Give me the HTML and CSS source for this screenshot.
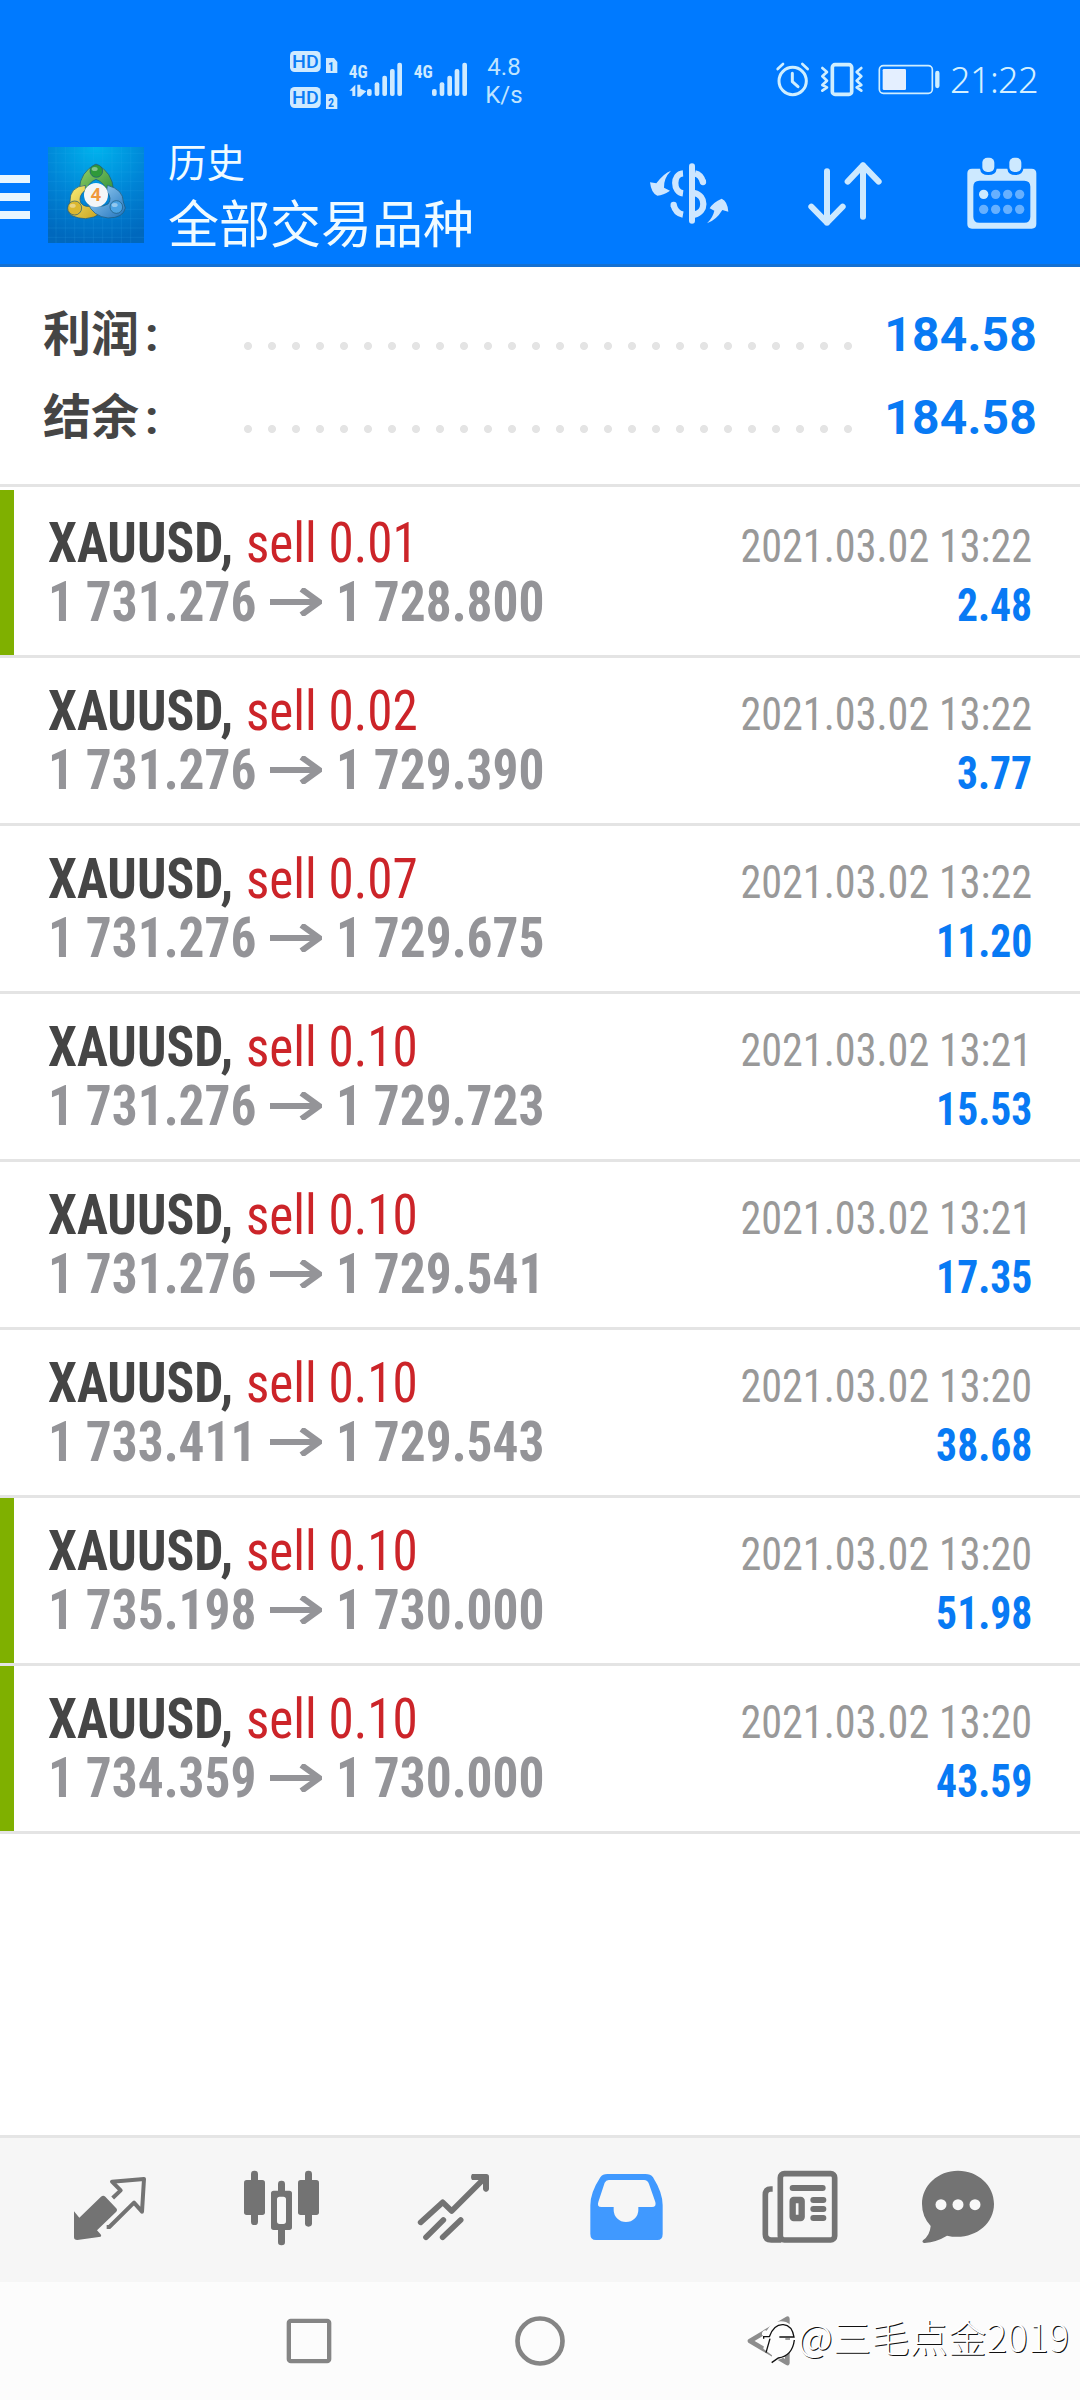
FILE: index.html
```html
<!DOCTYPE html>
<html lang="zh-CN">
<head>
<meta charset="utf-8">
<title>历史</title>
<link rel="stylesheet" href="styles.css">
</head>
<body>
<svg class="defs" width="0" height="0" aria-hidden="true">
  <symbol id="arrow" viewBox="0 0 156 84"><path d="M0 42H144M94 3L148 42L94 81" fill="none" stroke="#949498" stroke-width="18"/></symbol>
</svg>
<header class="top">
  <div class="status">
    <svg class="signal" width="200" height="90" viewBox="0 0 600 270">
      <g fill="#cfeaff">
        <rect x="60" y="63" width="92" height="63" rx="14"/><rect x="60" y="171" width="92" height="63" rx="14"/>
        <path d="M168 84h24l10 12v33h-34zM168 192h24l10 12v33h-34z"/>
        <rect x="291" y="177" width="14" height="21" rx="6"/><rect x="314" y="157" width="14" height="41" rx="6"/><rect x="337" y="137" width="14" height="61" rx="6"/><rect x="360" y="117" width="14" height="81" rx="6"/><rect x="382" y="98" width="14" height="100" rx="6"/>
        <rect x="486" y="177" width="14" height="21" rx="6"/><rect x="509" y="157" width="14" height="41" rx="6"/><rect x="532" y="137" width="14" height="61" rx="6"/><rect x="554" y="117" width="14" height="81" rx="6"/><rect x="577" y="98" width="14" height="100" rx="6"/>
        <path d="M238 182l18-18v34h-9v-16zM262 164h9v12l18 8-18 16h-9z"/>
        <text class="net" x="236" y="143" textLength="57" lengthAdjust="spacingAndGlyphs">4G</text>
        <text class="net" x="431" y="143" textLength="57" lengthAdjust="spacingAndGlyphs">4G</text>
      </g>
      <g fill="#0a7cf5">
        <text class="hd" x="66" y="115" textLength="80" lengthAdjust="spacingAndGlyphs">HD</text>
        <text class="hd" x="66" y="223" textLength="80" lengthAdjust="spacingAndGlyphs">HD</text>
        <text class="sim" x="174" y="124">1</text><text class="sim" x="174" y="232">2</text>
      </g>
    </svg>
    <div class="speed">4.8<br>K/s</div>
    <svg class="power" width="180" height="40" viewBox="45 60 540 120" fill="none" stroke="#cfeeff" stroke-linecap="round" stroke-linejoin="round">
      <circle cx="98" cy="123" r="41" stroke-width="9"/><path d="M97 100v25l17 15" stroke-width="9"/><path d="M53 87l16-15M143 87l-16-15" stroke-width="8"/>
      <rect x="217" y="74" width="58" height="89" rx="8" stroke-width="11"/>
      <path d="M187 84l14 12-14 13 14 13-14 13 14 7-14 10M304 84l-14 12 14 13-14 13 14 13-14 7 14 10" stroke-width="8"/>
      <rect x="358" y="77" width="159" height="83" rx="12" stroke-width="5"/><rect x="368" y="87" width="70" height="63" rx="4" fill="#e4efff" stroke="none"/><path d="M532 99v39" stroke-width="13"/>
    </svg>
    <div class="clock">21:22</div>
  </div>
  <div class="bar">
    <svg class="menu" width="30" height="44" viewBox="0 0 30 44" fill="#e8f6ff"><path d="M0 0h30v8H0zM0 18h30v8H0zM0 36h30v8H0z"/></svg>
    <svg class="logo" width="96" height="96" viewBox="144 51 288 288">
      <defs>
        <radialGradient id="sky" cx=".5" cy="0" r="1"><stop offset="0" stop-color="#00b4ee"/><stop offset=".55" stop-color="#0084d6"/><stop offset="1" stop-color="#0068bd"/></radialGradient>
        <linearGradient id="gr" x1="0" y1="0" x2="1" y2="1"><stop offset="0" stop-color="#9bd36a"/><stop offset="1" stop-color="#2b8f3a"/></linearGradient>
        <linearGradient id="ye" x1="0" y1="0" x2="1" y2="1"><stop offset="0" stop-color="#fbf07a"/><stop offset="1" stop-color="#c9a01c"/></linearGradient>
        <linearGradient id="bl" x1="0" y1="0" x2="1" y2="1"><stop offset="0" stop-color="#a4d8f8"/><stop offset="1" stop-color="#1f72bd"/></linearGradient>
      </defs>
      <path fill="url(#sky)" d="M144 51h288v288H144z"/>
      <path d="M168 51v288M196 51v288M224 51v288M252 51v288M280 51v288M308 51v288M336 51v288M364 51v288M392 51v288M144 70h288M144 98h288M144 126h288M144 154h288M144 182h288M144 210h288M144 238h288M144 266h288M144 294h288M144 322h288" stroke="#39b5ee" stroke-opacity=".22" stroke-width="2"/>
      <g stroke="#1c5a7a" stroke-opacity=".7" stroke-width="3">
        <path d="M238 178q2-52 50-76q50 24 53 80l-18 8q-8-32-35-42q-24 10-32 38z" fill="url(#gr)"/>
        <path d="M256 166q-48 4-46 50l-8 22q6 26 54 28q28-2 46-16l-22-24q-24 10-38-8q-8-20 14-38z" fill="url(#ye)"/>
        <path d="M322 166q48 12 48 50l6 18q-6 30-52 30q-44-4-62-46q34 20 62 4q14-16-4-38z" fill="url(#bl)"/>
        <circle cx="289" cy="123" r="19" fill="#2f9a3a"/><circle cx="224" cy="234" r="21" fill="#dcb830"/><circle cx="349" cy="231" r="19" fill="#4ba3e4"/>
      </g>
      <g fill="#fff" opacity=".4"><ellipse cx="284" cy="117" rx="9" ry="6"/><ellipse cx="218" cy="227" rx="9" ry="6"/><ellipse cx="344" cy="225" rx="9" ry="6"/></g>
      <circle cx="288" cy="195" r="36" fill="#f4f6f8"/>
      <text class="four" x="288" y="214">4</text>
    </svg>
    <div class="titles"><div class="screen">历史</div><div class="symbol">全部交易品种</div></div>
    <div class="actions">
      <svg width="80" height="64" viewBox="60 64 240 192" fill="#cde6ff">
        <path d="M126 90q-22 8-44 38l-19-3q4 34 22 40q18-1 38-15l-18-9q-1-29 21-51z"/>
        <path d="M234 248q18-18 22-38l-14-7q10-18 36-29q18 8 20 39l-18-5q-18 30-46 40z"/>
        <path d="M162 98C131 100 131 154 162 158M134 194q6 24 28 28M198 98q18 4 24 26M196 157C232 166 232 214 196 222" fill="none" stroke="#cde6ff" stroke-width="19"/>
        <circle cx="134" cy="193" r="9.500"/><circle cx="222" cy="124" r="9.500"/>
        <rect x="180" y="68" width="18" height="181" rx="9"/>
      </svg>
      <svg width="80" height="64" viewBox="528 67 240 192" fill="none" stroke="#cde9ff" stroke-width="18" stroke-linecap="round" stroke-linejoin="round"><path d="M594 95v154M547 201l47 48 47-48M702 231V77M656 126l46-49 47 49"/></svg>
      <svg width="76" height="76" viewBox="1004 46 228 228">
        <path fill="#cde9ff" fill-rule="evenodd" d="M1028 87H1052Q1054 106 1077 106T1102 87H1134Q1136 106 1158 106T1182 87H1207Q1221 87 1221 101V253Q1221 267 1207 267H1028Q1014 267 1014 253V101Q1014 87 1028 87ZM1050 123Q1032 123 1032 141V231Q1032 249 1050 249H1185Q1203 249 1203 231V141Q1203 123 1185 123Z"/>
        <rect x="1059" y="54" width="36" height="43" rx="15" fill="#cde9ff"/><rect x="1140" y="54" width="36" height="43" rx="15" fill="#cde9ff"/>
        <circle cx="1063" cy="164" r="14" fill="#cdeaff"/>
        <g fill="#66b0ff"><circle cx="1099" cy="164" r="14"/><circle cx="1135" cy="164" r="14"/><circle cx="1171" cy="164" r="14"/><circle cx="1063" cy="209" r="14"/><circle cx="1099" cy="209" r="14"/><circle cx="1135" cy="209" r="14"/><circle cx="1171" cy="209" r="14"/></g>
      </svg>
    </div>
  </div>
</header>
<section class="summary">
  <div class="sum"><span class="label">利润<span class="colon">:</span></span><span class="dots"></span><span class="total">184.58</span></div>
  <div class="sum"><span class="label">结余<span class="colon">:</span></span><span class="dots"></span><span class="total">184.58</span></div>
</section>
<main class="deals">
  <article class="deal closed"><div class="line"><span class="name">XAUUSD,</span><span class="side">sell 0.01</span><span class="date">2021.03.02 13:22</span></div><div class="line"><span class="price">1 731.276</span><svg class="to" width="52" height="28"><use href="#arrow"/></svg><span class="price">1 728.800</span><span class="gain">2.48</span></div></article>
  <article class="deal"><div class="line"><span class="name">XAUUSD,</span><span class="side">sell 0.02</span><span class="date">2021.03.02 13:22</span></div><div class="line"><span class="price">1 731.276</span><svg class="to" width="52" height="28"><use href="#arrow"/></svg><span class="price">1 729.390</span><span class="gain">3.77</span></div></article>
  <article class="deal"><div class="line"><span class="name">XAUUSD,</span><span class="side">sell 0.07</span><span class="date">2021.03.02 13:22</span></div><div class="line"><span class="price">1 731.276</span><svg class="to" width="52" height="28"><use href="#arrow"/></svg><span class="price">1 729.675</span><span class="gain">11.20</span></div></article>
  <article class="deal"><div class="line"><span class="name">XAUUSD,</span><span class="side">sell 0.10</span><span class="date">2021.03.02 13:21</span></div><div class="line"><span class="price">1 731.276</span><svg class="to" width="52" height="28"><use href="#arrow"/></svg><span class="price">1 729.723</span><span class="gain">15.53</span></div></article>
  <article class="deal"><div class="line"><span class="name">XAUUSD,</span><span class="side">sell 0.10</span><span class="date">2021.03.02 13:21</span></div><div class="line"><span class="price">1 731.276</span><svg class="to" width="52" height="28"><use href="#arrow"/></svg><span class="price">1 729.541</span><span class="gain">17.35</span></div></article>
  <article class="deal"><div class="line"><span class="name">XAUUSD,</span><span class="side">sell 0.10</span><span class="date">2021.03.02 13:20</span></div><div class="line"><span class="price">1 733.411</span><svg class="to" width="52" height="28"><use href="#arrow"/></svg><span class="price">1 729.543</span><span class="gain">38.68</span></div></article>
  <article class="deal closed"><div class="line"><span class="name">XAUUSD,</span><span class="side">sell 0.10</span><span class="date">2021.03.02 13:20</span></div><div class="line"><span class="price">1 735.198</span><svg class="to" width="52" height="28"><use href="#arrow"/></svg><span class="price">1 730.000</span><span class="gain">51.98</span></div></article>
  <article class="deal closed"><div class="line"><span class="name">XAUUSD,</span><span class="side">sell 0.10</span><span class="date">2021.03.02 13:20</span></div><div class="line"><span class="price">1 734.359</span><svg class="to" width="52" height="28"><use href="#arrow"/></svg><span class="price">1 730.000</span><span class="gain">43.59</span></div></article>
</main>
<nav class="tabs">
  <svg viewBox="84 144 252 252"><path d="M102 274v78q0 8 10 8l70-10q4-4-1-8l-10-11 57-55q6-6 0-12l-32-34q-6-6-13 0l-65 63z" fill="#737373" stroke="none"/><path d="M218 234L242 211L216 185L312 177L306 275L282 248L208 321H200" fill="none" stroke="#737373" stroke-width="12" stroke-linejoin="round"/></svg>
  <svg viewBox="600 144 252 252" fill="#737373"><rect x="612" y="180" width="63" height="105" rx="8"/><rect x="633" y="152" width="21" height="163" rx="10"/><rect x="774" y="180" width="63" height="105" rx="8"/><rect x="795" y="152" width="21" height="168" rx="10"/><rect x="714" y="182" width="21" height="50" rx="10"/><rect x="714" y="312" width="21" height="64" rx="10"/><path fill="#f8f8f8" d="M705 225h38v95h-38z"/><path fill-rule="evenodd" d="M701 212h47q8 0 8 8v102q0 8-8 8h-47q-8 0-8-8V220q0-8 8-8zm18 18q-8 0-8 8v66q0 8 8 8h11q8 0 8-8v-66q0-8-8-8z"/></svg>
  <svg viewBox="1116 144 252 252" fill="none" stroke="#737373" stroke-width="17" stroke-linecap="round" stroke-linejoin="round"><path d="M1142 307L1208 247L1235 273L1334 174M1158 352L1210 300M1208 352L1262 300"/><path d="M1296 162h43q8 0 8 8v38q-2 8-9 8t-9-8v-20l-14-8h-19q-3-4-3-9t3-9z" fill="#737373" stroke="none"/></svg>
  <svg viewBox="72 144 252 252"><path fill="#4099ff" fill-rule="evenodd" d="M142 162H256Q272 162 279 172Q308 218 308 256V342Q308 360 292 360H108Q91 360 91 342V256Q91 218 121 172Q128 162 142 162ZM146 180Q138 180 134 188L115 246Q110 261 124 261H161V270A37 36 0 0 0 235 270V261H276Q290 261 286 246L267 192Q263 180 252 180Z"/></svg>
  <svg viewBox="588 144 252 252" fill="none" stroke="#737373"><rect x="661" y="161" width="163" height="199" rx="12" stroke-width="17"/><path d="M638 207h-6q-16 0-16 18v118q0 17 18 17h30" stroke-width="17"/><path d="M698 204h90M760 240h30M760 267h30M760 294h30" stroke-width="18" stroke-linecap="round"/><rect x="698" y="240" width="27" height="54" rx="3" stroke-width="19"/></svg>
  <svg viewBox="1068 144 252 252"><path fill="#737373" d="M1194 152C1254 152 1302 196 1302 252C1302 318 1234 364 1161 347Q1130 366 1094 369Q1084 368 1089 361Q1110 346 1112 318Q1086 290 1086 252C1086 196 1134 152 1194 152Z"/><g fill="#f8f8f8"><circle cx="1143" cy="254" r="16.500"/><circle cx="1194" cy="254" r="16.500"/><circle cx="1245" cy="254" r="16.500"/></g></svg>
</nav>
<footer class="system">
  <svg viewBox="132 168 150 150" fill="none" stroke="#858585" stroke-width="13"><rect x="146.500" y="182.500" width="121" height="121" rx="6"/></svg>
  <svg viewBox="825 168 150 150" fill="none" stroke="#858585" stroke-width="14"><circle cx="900" cy="243" r="67.500"/></svg>
  <svg viewBox="138 168 150 150" fill="none" stroke="#8d8d8d" stroke-width="14" stroke-linejoin="round"><path d="M262 176L150 243L262 309Z"/></svg>
  <div class="mark">
    <svg width="36" height="52" viewBox="186 180 108 156"><path d="M196 236l-12-14q6-14 16-10q22-36 58-26q28 12 28 40q0 50-42 70l-30 10l2-20l-26-20z" fill="#fdfdfd"/><path d="M191 236v-6h17q14-38 42-36q26 2 32 37h-44M210 236l-12 42M283 240q-6 48-48 54l-20 14" fill="none" stroke="#111" stroke-width="4"/><path d="M256 237h14" stroke="#888" stroke-width="5"/></svg>
    <span>@三毛点金2019</span>
  </div>
</footer>
</body>
</html>
```
FILE: styles.css
```css
* { box-sizing: border-box; }
body {
  margin: 0;
  width: 1080px;
  height: 2400px;
  display: flex;
  flex-direction: column;
  background: #fff;
  font-family: Roboto, "Noto Sans CJK SC", sans-serif;
  overflow: hidden;
}
svg { display: block; flex: none; }
.defs { position: absolute; }

.top { height: 267px; background: #007aff; border-bottom: 3px solid #1470d2; color: #e8f6ff; }
.status { height: 130px; padding-left: 270px; display: flex; align-items: flex-start; }
.signal { margin-top: 30px; }
.net { font: 700 56px "Roboto Condensed", sans-serif; }
.hd { font: 500 56px Roboto, sans-serif; }
.sim { font: 700 36px "Roboto Condensed", sans-serif; }
.speed { width: 68px; margin-top: 53px; font-size: 24px; line-height: 28px; text-align: center; color: #bfe4ff; }
.power { margin: 60px 0 0 237px; }
.clock { margin: 56px 0 0 -5px; font: 300 36px/48px "Noto Sans", sans-serif; letter-spacing: -0.6px; color: #d5f0ff; }

.bar { height: 134px; display: flex; align-items: flex-start; }
.menu { margin-top: 45px; }
.logo { margin: 17px 0 0 18px; }
.four { font: 700 54px "Open Sans", sans-serif; fill: #f0983c; text-anchor: middle; }
.titles { width: 481px; margin: 7px 0 0 24px; color: #f0fbff; }
.screen { font-size: 38.500px; line-height: 54px; }
.symbol { font-size: 51px; line-height: 69px; }
.actions { flex: 1; display: flex; align-items: flex-start; padding-top: 32px; }
.actions svg:nth-child(2) { margin: 0 0 0 76px; }
.actions svg:nth-child(3) { margin: -7px 0 0 79px; }

.summary { height: 220px; padding: 26px 43px 0; border-bottom: 3px solid #e4e4e4; }
.sum { height: 83px; display: flex; align-items: baseline; line-height: 83px; }
.label { width: 193px; font-size: 48px; font-weight: 700; color: #454545; white-space: nowrap; }
.colon { margin-left: 6px; }
.dots { align-self: flex-start; width: 624px; height: 8px; margin-top: 49px; background: radial-gradient(circle at 12px 4px, #e4e4e4 3.600px, transparent 4.400px) 0 0 / 24px 8px repeat-x; }
.total { margin-left: auto; font-size: 48px; font-weight: 700; letter-spacing: 0.2px; color: #087af4; }

.deals { flex: 1; padding-top: 3px; }
.deal { height: 168px; padding: 24px 48px 0; border-bottom: 3px solid #e4e4e4; position: relative; }
.closed::before { content: ""; position: absolute; left: 0; top: 0; width: 14px; height: 165px; background: #7fb000; }
.line { height: 59px; display: flex; align-items: baseline; line-height: 59px; font-family: "Roboto Condensed", sans-serif; white-space: nowrap; }
.name, .side, .price { font-size: 55px; transform-origin: 0 50%; }
.name { width: 198px; font-weight: 700; color: #454545; transform: scaleX(.94); }
.side { font-weight: 450; color: #cc2429; transform: scaleX(.93); }
.price { width: 222px; font-weight: 700; color: #949498; transform: scaleX(.934); }
.to { align-self: flex-start; margin: 15px 14px 0 0; }
.date, .gain { margin-left: auto; font-size: 46px; transform-origin: 100% 50%; }
.date { color: #999; transform: scaleX(.917); }
.gain { font-weight: 700; color: #087af4; transform: scaleX(.905); }

.tabs { height: 147px; padding-left: 24px; border-top: 3px solid #e5e5e5; background: #f6f6f6; display: grid; grid-template-columns: repeat(5, 172px) 148px; place-items: center; }
.tabs svg { width: 84px; height: 84px; }
.system { position: relative; height: 118px; padding-left: 193px; background: #fcfcfc; display: grid; grid-template-columns: repeat(3, 231px); place-items: center; }
.system > svg { width: 50px; height: 50px; }
.mark { position: absolute; left: 762px; top: 36px; display: flex; align-items: flex-start; }
.mark svg { margin-top: 2px; }
.mark span { margin-top: -6px; font: 300 38px/48px "Noto Sans CJK SC", sans-serif; letter-spacing: 0.4px; color: #fff; text-shadow: 1px 1px 0.5px #111; white-space: nowrap; }
```
